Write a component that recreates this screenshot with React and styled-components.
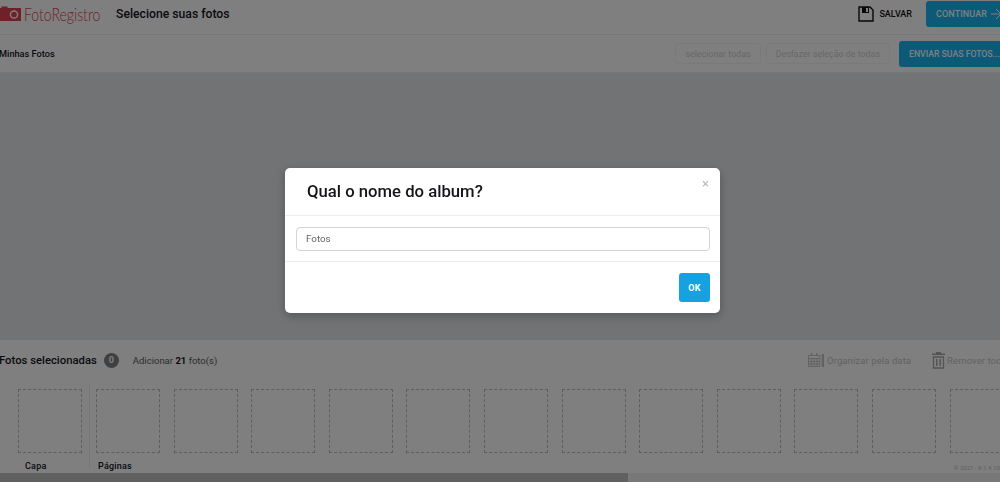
import React from "react";
import styled, { createGlobalStyle } from "styled-components";

const Global = createGlobalStyle`
  html, body { margin: 0; padding: 0; height: 100%; overflow: hidden; background: #e4e6e9; }
  * { box-sizing: border-box; }
  body { font-family: Roboto, "Liberation Sans", sans-serif; color: #111; }
`;

const Page = styled.div`
  width: 1012px;
  height: 482px;
  margin-left: -6px;
  display: flex;
  flex-direction: column;
`;
const TopBar = styled.header`
  height: 35px;
  flex: none;
  background: #fff;
  border-bottom: 1px solid #ececec;
  display: flex;
  align-items: center;
  padding: 0 0 7px 6px;
`;
const Logo = styled.div`
  display: flex;
  align-items: center;
  width: 116px;
  flex: none;
  gap: 3px;
  svg { flex: none; }
`;
const LogoText = styled.span`
  display: inline-block;
  font-family: Lato, sans-serif;
  font-weight: 300;
  font-size: 18px;
  line-height: 20px;
  color: #d8444f;
  transform: scaleX(0.78);
  transform-origin: left center;
`;
const PageTitle = styled.h1`
  margin: 0;
  font-size: 12.2px;
  font-weight: 500;
  color: #14141e;
`;
const Spacer = styled.div`flex: 1;`;
const SaveLink = styled.div`
  display: flex;
  align-items: center;
  gap: 5px;
  font-size: 9px;
  font-weight: 500;
  margin-right: 14px;
`;
const ContinueButton = styled.div`
  width: 92px;
  height: 26px;
  margin-right: -12px;
  background: #1ab2f0;
  border-radius: 3px 0 0 3px;
  color: #fff;
  font-size: 9px;
  font-weight: 500;
  letter-spacing: 0.1px;
  display: flex;
  align-items: center;
  gap: 4px;
  padding-left: 10px;
  svg { flex: none; }
`;
const ToolBar = styled.div`
  height: 38px;
  flex: none;
  background: #fff;
  border-bottom: 1px solid #ececec;
  display: flex;
  align-items: center;
  padding-left: 5px;
`;
const SectionLabel = styled.div`
  font-size: 9.2px;
  font-weight: 500;
  color: #14141e;
`;
const GhostButton = styled.div`
  height: 21px;
  padding: 0 9px;
  margin-right: ${(p) => p.$gap}px;
  border: 1px solid #f4f4f4;
  border-radius: 3px;
  font-size: 8.9px;
  color: #d0d0d0;
  display: flex;
  align-items: center;
`;
const SendButton = styled.div`
  width: 107px;
  height: 26px;
  margin-top: 1px;
  background: #1ab2f0;
  border-radius: 3px;
  color: #fff;
  font-size: 8.7px;
  font-weight: 500;
  display: flex;
  align-items: center;
  padding-left: 10px;
  white-space: nowrap;
`;
const Gallery = styled.main`
  flex: 1;
  background: #e4e6e9;
`;
const Selected = styled.section`
  height: 133px;
  flex: none;
  background: #fff;
  padding-top: 11px;
  position: relative;
`;
const SelectedHead = styled.div`
  display: flex;
  align-items: center;
  height: 18px;
  padding-left: 5px;
`;
const SelectedTitle = styled.div`
  font-size: 11.3px;
  font-weight: 500;
  color: #14141e;
`;
const CountBadge = styled.span`
  width: 15px;
  height: 15px;
  margin-left: 7px;
  border-radius: 50%;
  background: #808080;
  color: #fff;
  font-size: 9px;
  font-weight: 700;
  display: flex;
  align-items: center;
  justify-content: center;
`;
const AddHint = styled.div`
  margin-left: 14px;
  font-size: 9.5px;
  color: #5a5a5a;
  b { font-weight: 700; color: #14141e; }
`;
const SoftAction = styled.div`
  display: flex;
  align-items: center;
  gap: ${(p) => p.$iconGap}px;
  font-size: 9.5px;
  letter-spacing: 0.1px;
  color: #c4c4c4;
  margin-right: ${(p) => p.$gap}px;
  white-space: nowrap;
`;
const Tray = styled.div`
  display: flex;
  margin-top: 20px;
  padding-left: 24px;
`;
const SlotColumn = styled.div`
  display: flex;
  flex-direction: column;
  width: ${(p) => p.$width}px;
  flex: none;
`;
const CoverColumn = styled.div`
  width: 72px;
  flex: none;
  margin-right: 6px;
  margin-top: -6px;
  padding-top: 6px;
  height: 86px;
  border-right: 1px solid #ececec;
`;
const Slot = styled.div`
  width: 64px;
  height: 64px;
  flex: none;
  border: 1px dashed #bcbcbc;
`;
const SlotRow = styled.div`
  display: flex;
  gap: 13.6px;
`;
const SlotLabel = styled.div`
  margin-top: 8px;
  padding-left: ${(p) => p.$indent}px;
  font-size: 9px;
  font-weight: 500;
  letter-spacing: 0.2px;
  color: #14141e;
`;
const Version = styled.div`
  position: absolute;
  right: 3px;
  bottom: 2px;
  font-size: 6px;
  color: #c0c0c0;
  white-space: nowrap;
`;
const ScrollTrack = styled.div`
  height: 9px;
  flex: none;
  background: #f1f1f1;
`;
const ScrollThumb = styled.div`
  width: 634px;
  height: 100%;
  background: #c1c1c1;
`;
const Overlay = styled.div`
  position: fixed;
  inset: 0;
  background: rgba(0, 0, 0, 0.5);
  display: flex;
  align-items: flex-start;
  justify-content: center;
  padding: 168px 0 0 5px;
`;
const Dialog = styled.div`
  width: 435px;
  height: 145px;
  background: #fff;
  border-radius: 5px;
  box-shadow: 0 3px 10px rgba(0, 0, 0, 0.25);
  display: flex;
  flex-direction: column;
  position: relative;
`;
const DialogHead = styled.div`
  height: 48px;
  flex: none;
  border-bottom: 1px solid #ececec;
  display: flex;
  align-items: center;
  padding: 0 0 1px 22px;
`;
const DialogTitle = styled.h2`
  margin: 0;
  font-size: 16.7px;
  font-weight: 500;
  color: #14141e;
`;
const CloseMark = styled.span`
  position: absolute;
  top: 8px;
  right: 11px;
  font-size: 13px;
  line-height: 16px;
  color: #b8b8b8;
`;
const DialogBody = styled.div`
  height: 46px;
  flex: none;
  border-bottom: 1px solid #ececec;
  padding: 11px 10px 0 11px;
`;
const NameInput = styled.input`
  display: block;
  width: 100%;
  height: 24px;
  border: 1px solid #d4d4d4;
  border-radius: 4px;
  padding: 0 9px 1px;
  font: 400 9.8px Roboto, sans-serif;
  color: #666;
  background: #fff;
  outline: none;
`;
const DialogFoot = styled.div`
  flex: 1;
  display: flex;
  justify-content: flex-end;
  padding: 11px 10px 0 0;
`;
const OkButton = styled.button`
  width: 31px;
  height: 29px;
  padding: 0;
  border: none;
  border-radius: 3px;
  background: #17a1e0;
  color: #fff;
  font: 700 9px Roboto, sans-serif;
  letter-spacing: 0.2px;
`;

const CameraMark = () => (
  <svg width="21" height="15" viewBox="0 0 21 15" aria-hidden="true">
    <path fill="#d8444f" d="M0 2h1.500V.5h6V2H21v13H0z" />
    <circle cx="14" cy="8.500" r="3.600" fill="none" stroke="#fff" strokeWidth="1.500" />
  </svg>
);
const SaveIcon = () => (
  <svg width="16" height="16" viewBox="0 0 16 16" aria-hidden="true">
    <path fill="none" stroke="#111" strokeWidth="1.400" d="M1 1h11l3 3v11H1z" />
    <path fill="#111" d="M4 1h7v6H4z" />
    <path fill="#fff" d="M8 2h2v4H8z" />
  </svg>
);
const ArrowIcon = () => (
  <svg width="11" height="12" viewBox="0 0 11 12" aria-hidden="true">
    <path fill="none" stroke="#fff" strokeWidth="1" d="M0 6h10M5 1l5 5-5 5" />
  </svg>
);
const CalendarIcon = () => (
  <svg width="16" height="14" viewBox="0 0 17 14" preserveAspectRatio="none" aria-hidden="true">
    <path fill="none" stroke="#c4c4c4" strokeWidth="1" d="M.5 2.500h12v11H.5zM.5 5.500h12M3.500 5.500v8M6.500 5.500v8M9.500 5.500v8M.5 8.500h12M.5 11h12" />
    <path fill="#c4c4c4" d="M3 0h1.500v3H3zM8.500 0H10v3H8.500zM14.500 1H17v13h-2.500z" />
  </svg>
);
const TrashIcon = () => (
  <svg width="13" height="17" viewBox="0 0 13 17" aria-hidden="true">
    <path fill="#a8a8a8" d="M4 0h5v1.500h4V3H0V1.500h4z" />
    <path fill="none" stroke="#a8a8a8" strokeWidth="1.300" d="M1.500 5h10v11h-10z" />
    <path fill="#a8a8a8" d="M4 7h1.500v7H4zM7.500 7H9v7H7.500z" />
  </svg>
);

const pageSlots = Array.from({ length: 12 }, (_, i) => i);

export default function App() {
  return (
    <>
      <Global />
      <Page>
        <TopBar>
          <Logo>
            <CameraMark />
            <LogoText>FotoRegistro</LogoText>
          </Logo>
          <PageTitle>Selecione suas fotos</PageTitle>
          <Spacer />
          <SaveLink>
            <SaveIcon />
            SALVAR
          </SaveLink>
          <ContinueButton>
            CONTINUAR
            <ArrowIcon />
          </ContinueButton>
        </TopBar>
        <ToolBar>
          <SectionLabel>Minhas Fotos</SectionLabel>
          <Spacer />
          <GhostButton $gap={5}>selecionar todas</GhostButton>
          <GhostButton $gap={9}>Desfazer seleção de todas</GhostButton>
          <SendButton>ENVIAR SUAS FOTOS...</SendButton>
        </ToolBar>
        <Gallery />
        <Selected>
          <SelectedHead>
            <SelectedTitle>Fotos selecionadas</SelectedTitle>
            <CountBadge>0</CountBadge>
            <AddHint>
              Adicionar <b>21</b> foto(s)
            </AddHint>
            <Spacer />
            <SoftAction $gap={21} $iconGap={3}>
              <CalendarIcon />
              Organizar pela data
            </SoftAction>
            <SoftAction $gap={-6} $iconGap={2}>
              <TrashIcon />
              Remover todas
            </SoftAction>
          </SelectedHead>
          <Tray>
            <CoverColumn>
              <Slot />
              <SlotLabel $indent={7}>Capa</SlotLabel>
            </CoverColumn>
            <SlotColumn $width={900}>
              <SlotRow>
                {pageSlots.map((i) => (
                  <Slot key={i} />
                ))}
              </SlotRow>
              <SlotLabel $indent={2}>Páginas</SlotLabel>
            </SlotColumn>
          </Tray>
          <Version>© 2021 - 9.1.4.108</Version>
        </Selected>
        <ScrollTrack>
          <ScrollThumb />
        </ScrollTrack>
      </Page>
      <Overlay>
        <Dialog>
          <DialogHead>
            <DialogTitle>Qual o nome do album?</DialogTitle>
          </DialogHead>
          <CloseMark>×</CloseMark>
          <DialogBody>
            <NameInput defaultValue="Fotos" />
          </DialogBody>
          <DialogFoot>
            <OkButton>OK</OkButton>
          </DialogFoot>
        </Dialog>
      </Overlay>
    </>
  );
}
